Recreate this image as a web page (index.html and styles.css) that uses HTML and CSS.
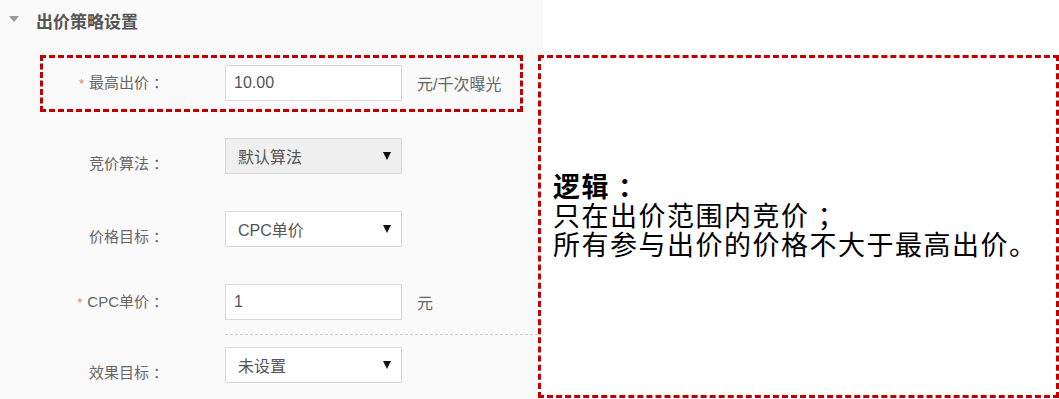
FILE: index.html
```html
<!DOCTYPE html>
<html lang="zh-CN">

<head>
    <meta charset="UTF-8">
    <meta name="viewport" content="width=device-width, initial-scale=1">
    <title>出价策略设置</title>
    <link rel="stylesheet" href="styles.css">
</head>

<body>
    <div class="page">
        <div class="panel">
            <div class="section-title"><span class="caret"></span>出价策略设置</div>

            <div class="row highlight">
                <label class="label" for="maxBid"><span class="req">*</span>最高出价<span class="punct">：</span></label>
                <input class="field" id="maxBid" type="text" value="10.00">
                <span class="unit">元/千次曝光</span>
            </div>

            <div class="row row-select">
                <label class="label">竞价算法<span class="punct">：</span></label>
                <div class="select disabled"><span>默认算法</span><span class="arrow"></span></div>
            </div>

            <div class="row row-select">
                <label class="label">价格目标<span class="punct">：</span></label>
                <div class="select"><span>CPC单价</span><span class="arrow"></span></div>
            </div>

            <div class="row">
                <label class="label" for="cpc"><span class="req">*</span>CPC单价<span class="punct">：</span></label>
                <input class="field" id="cpc" type="text" value="1">
                <span class="unit">元</span>
            </div>

            <div class="divider"></div>

            <div class="row row-select row-last">
                <label class="label">效果目标<span class="punct">：</span></label>
                <div class="select"><span>未设置</span><span class="arrow"></span></div>
            </div>
        </div>

        <div class="note">
            <div class="note-title">逻辑<span class="punct">：</span></div>
            <div>只在出价范围内竞价<span class="punct">；</span></div>
            <div>所有参与出价的价格不大于最高出价。</div>
        </div>
    </div>
</body>

</html>
```

FILE: styles.css
```css
body {
    margin: 0;
    background: #ffffff;
    font-family: 'Liberation Sans', 'Noto Sans CJK SC', sans-serif;
}

.page {
    display: flex;
    height: 399px;
    overflow: hidden;
}

.panel {
    width: 543px;
    flex-shrink: 0;
    background: #fafafa;
}

.section-title {
    display: flex;
    align-items: center;
    height: 40px;
    padding-left: 9px;
    font-size: 17px;
    font-weight: bold;
    color: #555;
}

.caret {
    width: 0;
    height: 0;
    margin-right: 17px;
    margin-top: -2px;
    border-left: 5px solid transparent;
    border-right: 5px solid transparent;
    border-top: 6px solid #999;
}

.row {
    display: flex;
    align-items: center;
    height: 57px;
    margin-left: 40px;
    margin-top: 16px;
    width: 483px;
    box-sizing: border-box;
    border: 3px dashed transparent;
    padding: 7px 0 8px;
}

.row.highlight {
    margin-top: 15px;
    border-color: #c00000;
}

.row-select {
    align-items: flex-start;
}

.row-select .label {
    padding-top: 8px;
}

.row-last {
    margin-top: 2px;
}

.label {
    width: 125px;
    flex-shrink: 0;
    text-align: right;
    font-size: 15px;
    line-height: 36px;
    color: #666;
}

.label .punct {
    margin-left: 4px;
}

.req {
    color: #f5803e;
    font-size: 13px;
    margin-right: 5px;
}

.field,
.select {
    margin-left: 57px;
    width: 177px;
    height: 36px;
    flex-shrink: 0;
    box-sizing: border-box;
    border: 1px solid #d9d9d9;
    background: #fff;
    padding: 0 8px;
    font-family: 'Liberation Sans', 'Noto Sans CJK SC', sans-serif;
    font-size: 16px;
    color: #555;
    outline: none;
}

.select {
    display: flex;
    align-items: center;
    justify-content: space-between;
    padding: 0 10px 0 12px;
}

.select.disabled {
    background: #efefef;
}

.arrow {
    width: 0;
    height: 0;
    border-left: 4px solid transparent;
    border-right: 4px solid transparent;
    border-top: 8px solid #111;
}

.unit {
    margin-left: 15px;
    font-size: 16px;
    color: #666;
}

.divider {
    margin: 3px 0 0 225px;
    border-top: 1px dashed #ccc;
}

.note {
    width: 521px;
    height: 343px;
    margin: 55px 0 0 -5px;
    box-sizing: border-box;
    border: 3px dashed #c00000;
    background: #fff;
    display: flex;
    flex-direction: column;
    justify-content: center;
    padding: 0 0 24px 12px;
    font-family: 'Noto Sans CJK SC', sans-serif;
    font-size: 27px;
    letter-spacing: 1.5px;
    line-height: 29px;
    color: #000;
}

.note .punct {
    margin-left: 8px;
}

.note-title {
    font-weight: bold;
}
```
